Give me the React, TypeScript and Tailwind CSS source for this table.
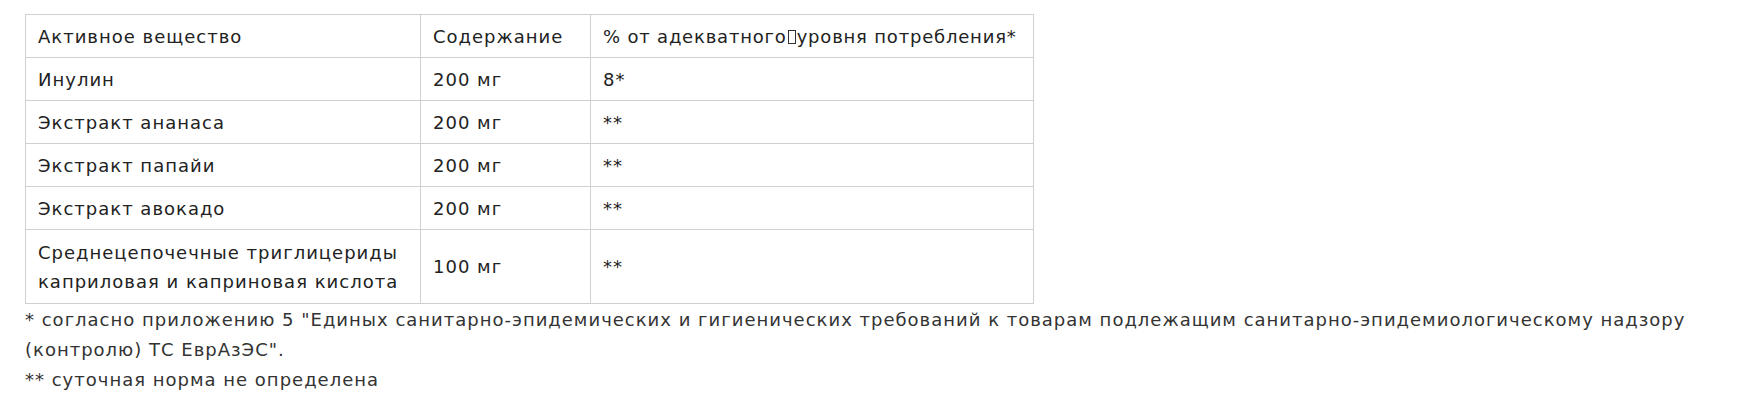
const rows: { name: React.ReactNode; amount: string; pct: string }[] = [
  { name: "Инулин", amount: "200 мг", pct: "8*" },
  { name: "Экстракт ананаса", amount: "200 мг", pct: "**" },
  { name: "Экстракт папайи", amount: "200 мг", pct: "**" },
  { name: "Экстракт авокадо", amount: "200 мг", pct: "**" },
  {
    name: "Среднецепочечные триглицериды каприловая и каприновая кислота",
    amount: "100 мг",
    pct: "**",
  },
];

const cell = "border border-[#d0d0d0] px-3 py-[6.5px] align-middle";

export default function App() {
  return (
    <div className="min-h-[409px] w-full bg-white pl-[25px] pt-[14px] font-['DejaVu_Sans',sans-serif] text-[18px] tracking-[1px] text-[#222]">
      <table className="w-[1008px] table-fixed border-collapse leading-[29px]">
        <tbody>
          <tr>
            <td className={`${cell} w-[395px]`}>Активное вещество</td>
            <td className={`${cell} w-[170px]`}>Содержание</td>
            <td className={`${cell} w-[443px] whitespace-nowrap tracking-[0.8px]`}>
              % от адекватного
              <span className="mx-[1px] inline-block h-[14px] w-[8px] border border-[#333] align-[-1px]"></span>
              уровня потребления*
            </td>
          </tr>
          {rows.map((r, i) => (
            <tr key={i} className={i === rows.length - 1 ? "h-[74px]" : ""}>
              <td className={cell}>{r.name}</td>
              <td className={cell}>{r.amount}</td>
              <td className={cell}>{r.pct}</td>
            </tr>
          ))}
        </tbody>
      </table>
      <div className="mt-[1px] leading-[30px] text-[#333]">
        <p>
          * согласно приложению 5 "Единых санитарно-эпидемических и гигиенических требований к товарам подлежащим санитарно-эпидемиологическому надзору
          <br />
          (контролю) ТС ЕврАзЭС".
        </p>
        <p>** суточная норма не определена</p>
      </div>
    </div>
  );
}
